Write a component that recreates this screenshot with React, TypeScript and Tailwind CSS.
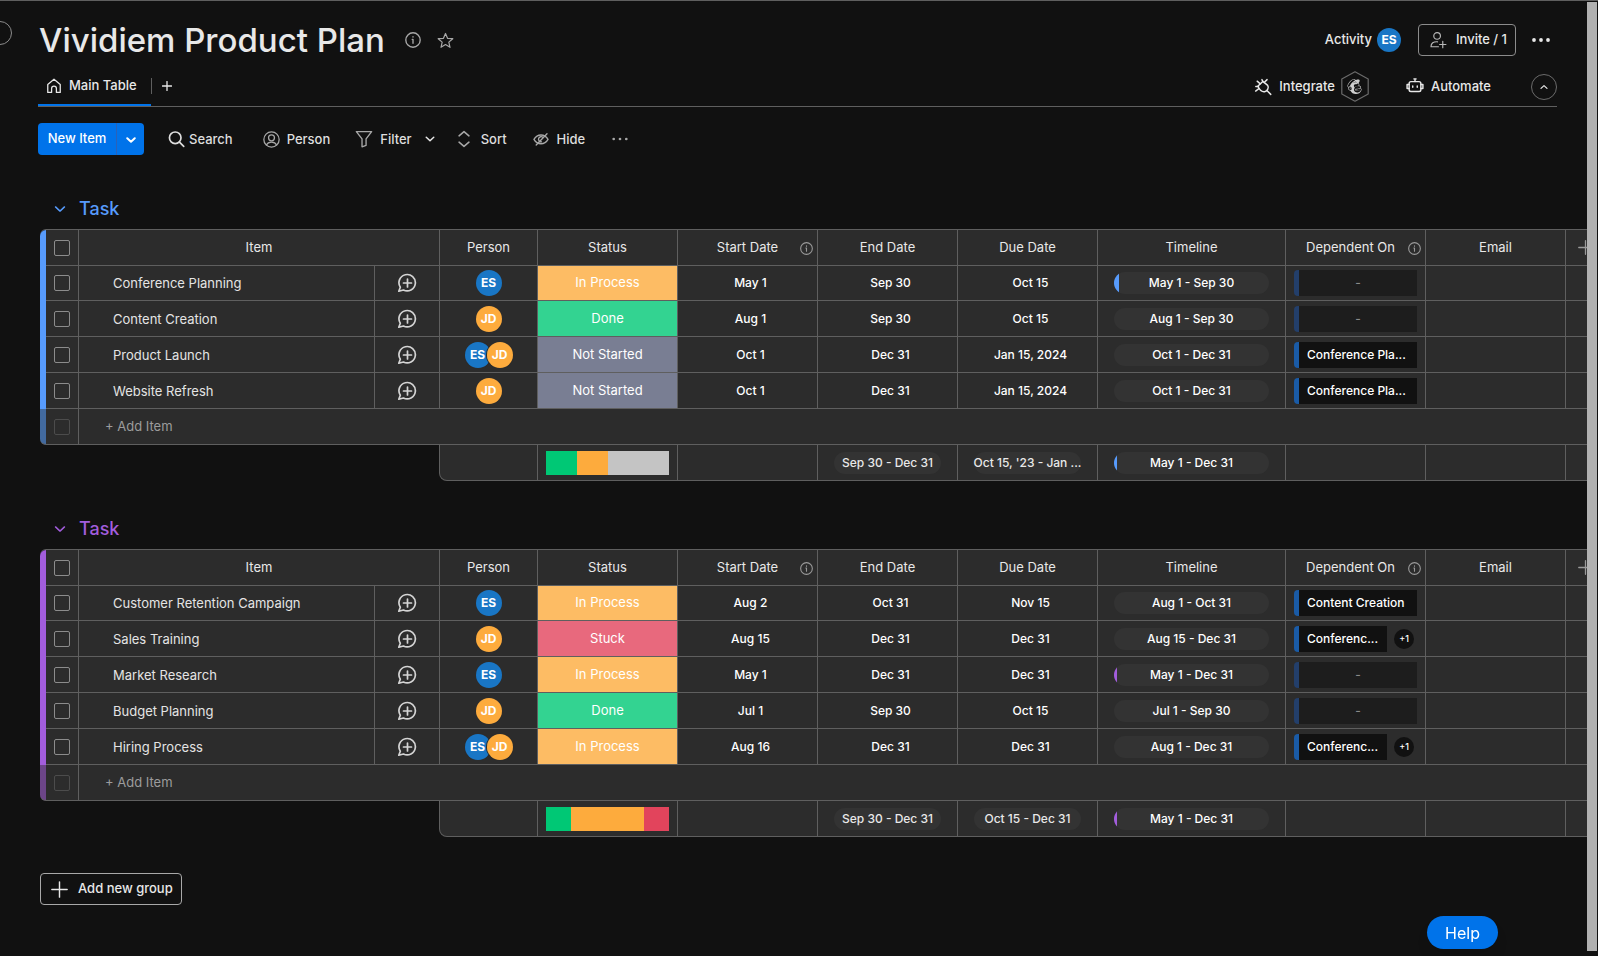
import type { ReactNode } from "react";
import { SiMailchimp } from "react-icons/si";

type Person = "ES" | "JD";
type Status = "In Process" | "Done" | "Not Started" | "Stuck";

interface Item {
  name: string;
  people: Person[];
  status: Status;
  start: string;
  end: string;
  due: string;
  timeline: string;
  progress?: "wide" | "thin";
  dependsOn?: string;
  more?: string;
}

interface Group {
  id: string;
  accent: "blue" | "purple";
  items: Item[];
  battery: { color: string; share: number }[];
  endRange: string;
  dueRange: string;
}

const groups: Group[] = [
  {
    id: "g1",
    accent: "blue",
    items: [
      { name: "Conference Planning", people: ["ES"], status: "In Process", start: "May 1", end: "Sep 30", due: "Oct 15", timeline: "May 1 - Sep 30", progress: "wide" },
      { name: "Content Creation", people: ["JD"], status: "Done", start: "Aug 1", end: "Sep 30", due: "Oct 15", timeline: "Aug 1 - Sep 30" },
      { name: "Product Launch", people: ["ES", "JD"], status: "Not Started", start: "Oct 1", end: "Dec 31", due: "Jan 15, 2024", timeline: "Oct 1 - Dec 31", dependsOn: "Conference Pla..." },
      { name: "Website Refresh", people: ["JD"], status: "Not Started", start: "Oct 1", end: "Dec 31", due: "Jan 15, 2024", timeline: "Oct 1 - Dec 31", dependsOn: "Conference Pla..." },
    ],
    battery: [
      { color: "#00c875", share: 1 },
      { color: "#fdab3d", share: 1 },
      { color: "#c4c4c4", share: 2 },
    ],
    endRange: "Sep 30 - Dec 31",
    dueRange: "Oct 15, '23 - Jan ...",
  },
  {
    id: "g2",
    accent: "purple",
    items: [
      { name: "Customer Retention Campaign", people: ["ES"], status: "In Process", start: "Aug 2", end: "Oct 31", due: "Nov 15", timeline: "Aug 1 - Oct 31", dependsOn: "Content Creation" },
      { name: "Sales Training", people: ["JD"], status: "Stuck", start: "Aug 15", end: "Dec 31", due: "Dec 31", timeline: "Aug 15 - Dec 31", dependsOn: "Conferenc...", more: "+1" },
      { name: "Market Research", people: ["ES"], status: "In Process", start: "May 1", end: "Dec 31", due: "Dec 31", timeline: "May 1 - Dec 31", progress: "thin" },
      { name: "Budget Planning", people: ["JD"], status: "Done", start: "Jul 1", end: "Sep 30", due: "Oct 15", timeline: "Jul 1 - Sep 30" },
      { name: "Hiring Process", people: ["ES", "JD"], status: "In Process", start: "Aug 16", end: "Dec 31", due: "Dec 31", timeline: "Aug 1 - Dec 31", dependsOn: "Conferenc...", more: "+1" },
    ],
    battery: [
      { color: "#00c875", share: 1 },
      { color: "#fdab3d", share: 3 },
      { color: "#e2445c", share: 1 },
    ],
    endRange: "Sep 30 - Dec 31",
    dueRange: "Oct 15 - Dec 31",
  },
];

const accents = {
  blue: { text: "text-[#579bfc]", bar: "bg-[#579bfc]", faded: "bg-[#426a9f]" },
  purple: { text: "text-[#a25ddc]", bar: "bg-[#a25ddc]", faded: "bg-[#6c4588]" },
};

const statusColors: Record<Status, string> = {
  "In Process": "bg-[#fdbc64]",
  Done: "bg-[#33d391]",
  "Not Started": "bg-[#797e93]",
  Stuck: "bg-[#e8697d]",
};

const CELL_BASE = "border-r border-b border-[#5f5f5f] p-0";
const CELL = `${CELL_BASE} bg-[#2c2c2c]`;

function Svg({ size, className = "", width = 1.2, children }: { size: number; className?: string; width?: number; children: ReactNode }) {
  return (
    <svg
      width={size}
      height={size}
      viewBox="0 0 20 20"
      fill="none"
      stroke="currentColor"
      strokeWidth={width}
      strokeLinecap="round"
      strokeLinejoin="round"
      aria-hidden="true"
      className={`shrink-0 ${className}`}
    >
      {children}
    </svg>
  );
}

function InfoIcon({ size, className = "" }: { size: number; className?: string }) {
  return (
    <Svg size={size} className={className} width={1.7}>
      <circle cx="10" cy="10" r="9" />
      <path d="M10 9.2v5M9 9.2h1M10 5.800v.6" />
    </Svg>
  );
}

function Chevron({ size, className = "", width = 2.4 }: { size: number; className?: string; width?: number }) {
  return (
    <Svg size={size} className={className} width={width}>
      <path d="M2.500 6.500 10 13.500 17.500 6.500" />
    </Svg>
  );
}

function Dots({ size, className = "", r }: { size: number; className?: string; r: number }) {
  return (
    <svg width={size} height={size} viewBox="0 0 20 20" fill="currentColor" aria-hidden="true" className={`shrink-0 ${className}`}>
      <circle cx="3" cy="10" r={r} />
      <circle cx="10" cy="10" r={r} />
      <circle cx="17" cy="10" r={r} />
    </svg>
  );
}

function Avatar({ who, small }: { who: Person; small?: boolean }) {
  return (
    <span
      className={`flex shrink-0 items-center justify-center rounded-full text-xs font-bold text-white ${small ? "size-6" : "size-[26px]"} ${who === "ES" ? "bg-[#1976c5]" : "bg-[#fdab3d]"}`}
    >
      {who}
    </span>
  );
}

function Check({ label, faded }: { label: string; faded?: boolean }) {
  return (
    <input
      type="checkbox"
      aria-label={label}
      disabled={faded}
      className={`mx-auto block size-4 appearance-none rounded-[2px] border checked:bg-[#0073ea] ${faded ? "border-[#4c4c4c]" : "border-[#8c8c8c]"}`}
    />
  );
}

function TimelinePill({ range, progress, accent }: { range: string; progress?: "wide" | "thin"; accent: Group["accent"] }) {
  return (
    <div className="relative mx-4 flex h-[22px] items-center justify-center overflow-hidden rounded-full bg-[#333333] text-xs font-medium text-white">
      {progress && <span className={`absolute inset-y-0 left-0 ${progress === "wide" ? "w-[5px]" : "w-[3px]"} ${accents[accent].bar}`} />}
      {range}
    </div>
  );
}

function DependentCell({ item }: { item: Item }) {
  const filled = Boolean(item.dependsOn);
  return (
    <div className="mx-2 flex items-center gap-[7px] text-xs font-medium">
      <div
        className={`flex h-[26px] min-w-0 flex-1 items-center overflow-hidden rounded-l border-l-[5px] ${
          filled ? "border-[#1a5ba6] bg-[#111111] pl-2 text-white" : "justify-center border-[#233f6b] bg-[#1d1d1d] text-[#8a8a8a]"
        }`}
      >
        <span className="whitespace-nowrap">{item.dependsOn ?? "-"}</span>
      </div>
      {item.more && (
        <span className="mr-[3px] flex size-[20px] items-center justify-center rounded-full bg-[#111111] text-[9px] text-white">{item.more}</span>
      )}
    </div>
  );
}

function HeaderCell({ label, info, span, shifted }: { label: string; info?: boolean; span?: number; shifted?: boolean }) {
  return (
    <th colSpan={span} scope="col" className={`${CELL} relative text-center text-[13px] font-normal text-[#e8e8e8]`}>
      <span className={shifted ? "pr-[10px]" : ""}>{label}</span>
      {info && <InfoIcon size={13} className="absolute top-3 right-1 text-[#9a9a9a]" />}
    </th>
  );
}

function DateCell({ children }: { children: string }) {
  return (
    <td className={`${CELL} text-center text-xs font-medium text-white`}>
      <span className="pl-[6px]">{children}</span>
    </td>
  );
}

function BoardGroup({ group }: { group: Group }) {
  const accent = accents[group.accent];
  return (
    <section className="mb-[27px]">
      <h2 className={`flex h-[41px] items-center gap-[11px] pl-[12px] text-lg font-medium ${accent.text}`}>
        <button type="button" aria-label="Collapse group" className="flex size-4 items-center justify-center">
          <Chevron size={12} />
        </button>
        Task
      </h2>
      <div className="overflow-hidden">
        <table className="w-full min-w-[1548px] table-fixed border-separate border-spacing-0 rounded-tl-md border-t border-[#5f5f5f]">
          <colgroup>
            <col className="w-[6px]" />
            <col className="w-[33px]" />
            <col className="w-[296px]" />
            <col className="w-[65px]" />
            <col className="w-[98px]" />
            <col className="w-[140px]" />
            <col className="w-[140px]" />
            <col className="w-[140px]" />
            <col className="w-[140px]" />
            <col className="w-[188px]" />
            <col className="w-[140px]" />
            <col className="w-[140px]" />
            <col />
          </colgroup>
          <thead>
            <tr className="h-9">
              <td className={`rounded-tl-md p-0 ${accent.bar}`} />
              <td className={CELL}>
                <Check label="Select all items" />
              </td>
              <HeaderCell label="Item" span={2} />
              <HeaderCell label="Person" />
              <HeaderCell label="Status" />
              <HeaderCell label="Start Date" info />
              <HeaderCell label="End Date" />
              <HeaderCell label="Due Date" />
              <HeaderCell label="Timeline" />
              <HeaderCell label="Dependent On" info shifted />
              <HeaderCell label="Email" />
              <th scope="col" className="overflow-hidden border-b border-[#5f5f5f] bg-[#2c2c2c] p-0">
                <button type="button" aria-label="Add column" className="block pl-3 text-[#9a9a9a]">
                  <Svg size={15} width={1.7}>
                    <path d="M10 1v18M1 10h18" />
                  </Svg>
                </button>
              </th>
            </tr>
          </thead>
          <tbody>
            {group.items.map((item) => (
              <tr key={item.name} className="h-9 first:h-[35px]">
                <td className={`p-0 ${accent.bar}`} />
                <td className={CELL}>
                  <Check label={`Select ${item.name}`} />
                </td>
                <td className={CELL}>
                  <div className="truncate pt-[2px] pl-[34px] text-[13px] text-[#e4e4e4]">{item.name}</div>
                </td>
                <td className={CELL}>
                  <button type="button" aria-label={`Start a conversation about ${item.name}`} className="mx-auto block text-[#d4d4d4]">
                    <Svg size={20} width={1.7}>
                      <path d="M3.300 14.200A8.200 8.200 0 1 1 6.400 17L1.800 18.200Z" />
                      <path d="M10.500 6v8M6.500 10h8" />
                    </Svg>
                  </button>
                </td>
                <td className={CELL}>
                  <div className="flex items-center justify-center -space-x-1">
                    {item.people.map((who) => (
                      <span key={who} className={item.people.length > 1 ? "relative rounded-full ring-1 ring-[#2c2c2c]" : ""}>
                        <Avatar who={who} />
                      </span>
                    ))}
                  </div>
                </td>
                <td className={`${CELL_BASE} text-center text-[13px] text-white ${statusColors[item.status]}`}>{item.status}</td>
                <DateCell>{item.start}</DateCell>
                <DateCell>{item.end}</DateCell>
                <DateCell>{item.due}</DateCell>
                <td className={CELL}>
                  <TimelinePill range={item.timeline} progress={item.progress} accent={group.accent} />
                </td>
                <td className={CELL}>
                  <DependentCell item={item} />
                </td>
                <td className={CELL} />
                <td className="border-b border-[#5f5f5f] bg-[#2c2c2c] p-0" />
              </tr>
            ))}
            <tr className="h-9">
              <td className={`rounded-bl-md border-b border-[#5f5f5f] p-0 ${accent.faded}`} />
              <td className={CELL}>
                <Check label="Select new item" faded />
              </td>
              <td colSpan={11} className="border-b border-[#5f5f5f] bg-[#2c2c2c] p-0">
                <input
                  type="text"
                  aria-label="Add item"
                  placeholder="+ Add Item"
                  className="block w-[260px] bg-transparent pl-[26px] text-[13px] outline-none placeholder:text-[#9c9c9c]"
                />
              </td>
            </tr>
          </tbody>
          <tfoot>
            <tr className="h-9">
              <td colSpan={4} className="p-0" />
              <td className="h-9 p-0">
                <div className="-ml-px h-9 rounded-bl-lg border-r border-b border-l border-[#5f5f5f] bg-[#2c2c2c]" />
              </td>
              <td className={CELL}>
                <div className="mx-2 flex h-6">
                  {group.battery.map((part) => (
                    <span key={part.color} style={{ flexGrow: part.share, backgroundColor: part.color }} />
                  ))}
                </div>
              </td>
              <td className={CELL} />
              {[group.endRange, group.dueRange].map((range) => (
                <td key={range} className={CELL}>
                  <div className="mx-4 flex h-[22px] items-center justify-center rounded-full bg-[#333333] text-xs font-medium whitespace-nowrap">{range}</div>
                </td>
              ))}
              <td className={CELL}>
                <TimelinePill range="May 1 - Dec 31" progress="thin" accent={group.accent} />
              </td>
              <td className={CELL} />
              <td className={CELL} />
              <td className="border-b border-[#5f5f5f] bg-[#2c2c2c] p-0" />
            </tr>
          </tfoot>
        </table>
      </div>
    </section>
  );
}

function ToolbarButton({ label, icon, className }: { label: string; icon: ReactNode; className: string }) {
  return (
    <button type="button" className={`flex h-8 items-center text-[13px] font-medium text-[#dedede] ${className}`}>
      {icon}
      <span className="pt-[2px]">{label}</span>
    </button>
  );
}

export default function App() {
  return (
    <div className="flex min-h-screen border-t border-[#5f5f5f] bg-[#111111] font-['Inter','Liberation_Sans',sans-serif] text-[#e8e8e8]">
      <button
        type="button"
        aria-label="Open navigation"
        className="absolute top-[21px] -left-3 size-6 rounded-full border border-[#8c8c8c]"
      />

      <main className="min-w-0 flex-1">
        <header className="pr-[30px] pl-[38px]">
          <div className="flex h-[70px] items-center pt-2">
            <h1 className="pl-px text-[33px] leading-10 font-medium">Vividiem Product Plan</h1>
            <button type="button" aria-label="Board info" className="ml-5 text-[#a8a8a8]">
              <InfoIcon size={16} />
            </button>
            <button type="button" aria-label="Add to favorites" className="ml-4 text-[#a8a8a8]">
              <Svg size={17} width={1.4}>
                <path d="M10 1.700 12.400 7.400 18.600 7.900 13.900 11.900 15.300 18 10 14.700 4.700 18 6.100 11.900 1.400 7.900 7.600 7.400Z" />
              </Svg>
            </button>
            <div className="ml-auto flex items-center">
              <button type="button" className="flex items-center gap-[5px] text-[13px] font-medium">
                Activity
                <Avatar who="ES" small />
              </button>
              <button type="button" className="ml-[17px] flex h-8 items-center gap-[9px] rounded border border-[#8c8c8c] pr-2 pl-[10px] text-[13px] font-medium">
                <Svg size={18} width={1.3} className="text-[#b8b8b8]">
                  <circle cx="9" cy="5.500" r="3.700" />
                  <path d="M10.500 17.500H2.200C2.200 13.500 5 11.700 9.500 12M15.300 11.500v7M11.800 15h7" />
                </Svg>
                Invite / 1
              </button>
              <button type="button" aria-label="Board options" className="mr-[6px] ml-[15px]">
                <Dots size={20} r={1.9} />
              </button>
            </div>
          </div>

          <div className="flex h-9 items-stretch border-b border-[#5f5f5f]">
            <button type="button" className="flex w-[113px] items-center gap-[7px] border-b-2 border-[#0073ea] pb-1 pl-2 text-[13px] font-medium">
              <Svg size={16} width={1.6}>
                <path d="M2.200 18V8L10 1.500 17.800 8V18H13V13.200A3 3 0 0 0 7 13.200V18Z" />
              </Svg>
              Main Table
            </button>
            <span className="mt-[7px] h-4 w-px bg-[#5f5f5f]" />
            <button type="button" aria-label="Add view" className="mb-[6px] ml-[10px]">
              <Svg size={10} width={2.600}>
                <path d="M10 1v18M1 10h18" />
              </Svg>
            </button>
            <div className="ml-auto flex items-center pb-1 text-[13px] font-medium">
              <button type="button" className="flex items-center gap-[7px]">
                <Svg size={18} width={1.6}>
                  <path d="M4.200 9.200 9.800 3.800 15.200 8.200C17 10.800 14.800 14.600 11.800 15.200 8.500 15.800 6.400 13.600 4.200 9.200Z" />
                  <path d="M3.500 3.500 7 6.500M11.300 5 14.500 1.800M2 9.500h3M1.800 14.500 5.800 11.600M14.600 14.200 18.600 18.200M9.800 3.800 8.800 1.800" />
                </Svg>
                Integrate
              </button>
              <span className="relative ml-[6px] flex h-[31px] w-7 items-center justify-center">
                <svg viewBox="0 0 28 31" fill="none" stroke="#6b6b6b" strokeWidth="1.200" strokeLinejoin="round" aria-hidden="true" className="absolute inset-0 h-full w-full">
                  <path d="M14 .8 27.200 8v15L14 30.200.8 23V8Z" />
                </svg>
                <SiMailchimp size={15} aria-label="Mailchimp" className="text-[#cfcfcf]" />
              </span>
              <button type="button" className="ml-[37px] flex items-center gap-[7px]">
                <Svg size={18} width={1.6}>
                  <rect x="3.500" y="4" width="13" height="11" rx="2" />
                  <path d="M10 4V1M8.800 1h2.400M3.500 7.200H1.200v4.500h2.300M16.500 7.200h2.300v4.500h-2.300M7.500 8.800v1.500M12.500 8.800v1.500" />
                </Svg>
                Automate
              </button>
              <button type="button" aria-label="Collapse header" className="ml-10 flex size-[26px] items-center justify-center rounded-full border border-[#6b6b6b]">
                <Chevron size={8} width={3} className="rotate-180" />
              </button>
            </div>
          </div>
        </header>

        <div className="flex items-center pt-4 pl-[38px]">
          <div className="flex h-8 overflow-hidden rounded bg-[#0073ea] text-white">
            <button type="button" className="w-[78px] text-center text-[13px] font-medium whitespace-nowrap">New Item</button>
            <button type="button" aria-label="More item types" className="flex w-7 items-center justify-center border-l border-[#2b62b8] pt-px">
              <Chevron size={10} width={4} />
            </button>
          </div>
          <ToolbarButton
            label="Search"
            className="ml-6 gap-[4px]"
            icon={
              <Svg size={17} width={2}>
                <circle cx="8.500" cy="8" r="6.800" />
                <path d="m13.500 13 5 5" />
              </Svg>
            }
          />
          <ToolbarButton
            label="Person"
            className="ml-[30px] gap-[7px]"
            icon={
              <Svg size={17} width={1.500} className="text-[#a8a8a8]">
                <circle cx="10" cy="10" r="9" />
                <circle cx="10" cy="8" r="3.500" />
                <path d="M4 16.500C5.200 13.800 7.500 13 10 13s4.800.8 6 3.500" />
              </Svg>
            }
          />
          <ToolbarButton
            label="Filter"
            className="ml-[25px] gap-[7px]"
            icon={
              <Svg size={18} width={1.500} className="text-[#a8a8a8]">
                <path d="M1.500 1.800h17L12.300 9.800V17L7.800 18.700V9.800Z" />
              </Svg>
            }
          />
          <button type="button" aria-label="Filter options" className="ml-[13px]">
            <Chevron size={10} width={3} />
          </button>
          <ToolbarButton
            label="Sort"
            className="ml-[20px] gap-2"
            icon={
              <Svg size={18} width={1.700} className="text-[#a8a8a8]">
                <path d="M4.500 6.500 10 1.800l5.500 4.700M4.500 13.500l5.500 4.700 5.500-4.700" />
              </Svg>
            }
          />
          <ToolbarButton
            label="Hide"
            className="ml-[26px] gap-2"
            icon={
              <Svg size={16} width={1.700} className="text-[#a8a8a8]">
                <path d="M1.200 10.500C3.500 6.500 6.500 5 10 5s6.500 1.500 8.800 5.500C16.500 14.500 13.500 16 10 16S3.500 14.500 1.200 10.500Z" />
                <path d="M12.500 8.200A3.200 3.200 0 1 0 10.500 13.500M4 17.500 17.500 3.500" />
              </Svg>
            }
          />
          <button type="button" aria-label="More actions" className="ml-[26px] text-[#a8a8a8]">
            <Dots size={18} r={1.500} />
          </button>
        </div>

        <div className="pt-[33px] pl-10">
          {groups.map((group) => (
            <BoardGroup key={group.id} group={group} />
          ))}
          <button type="button" className="mt-9 flex h-8 items-center gap-[10px] rounded border border-[#a8a8a8] pr-2 pl-[10px] text-[13px] font-medium">
            <Svg size={17} width={1.700}>
              <path d="M10 1v18M1 10h18" />
            </Svg>
            Add new group
          </button>
        </div>
      </main>

      <div aria-hidden="true" className="mt-px mr-px mb-[5px] w-[10px] shrink-0 bg-[#b1b1b1]" />

      <button type="button" className="fixed right-[100px] bottom-[7px] h-[33px] w-[71px] rounded-full bg-[#0073ea] text-base text-white shadow-lg">
        Help
      </button>
    </div>
  );
}
